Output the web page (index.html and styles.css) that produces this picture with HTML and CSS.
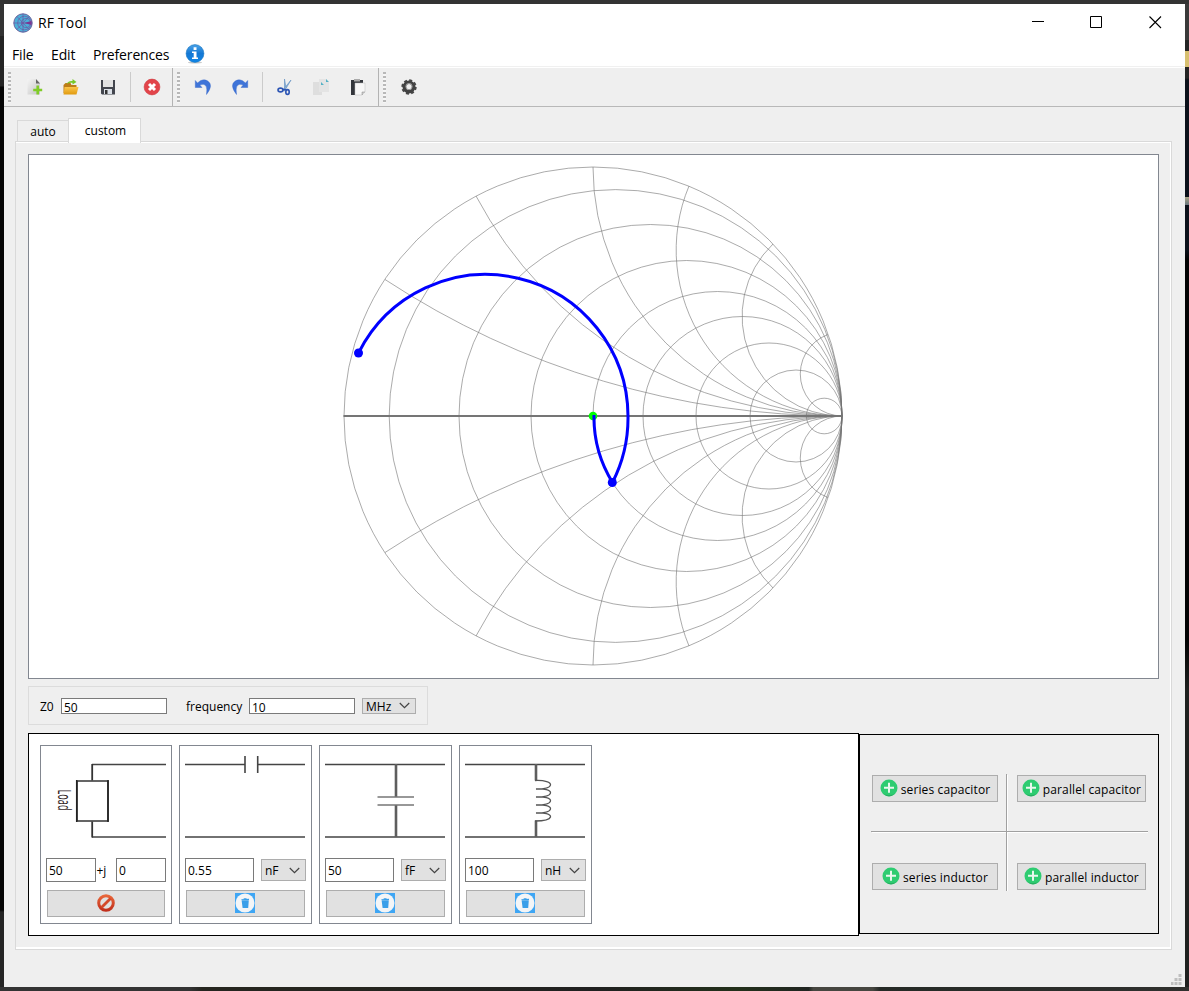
FILE: index.html
```html
<!DOCTYPE html>
<html lang="en">
<head>
<meta charset="utf-8">
<title>RF Tool</title>
<link rel="stylesheet" href="styles.css">
</head>
<body>
<svg class="defs" width="0" height="0">
  <defs>
    <linearGradient id="paper" x1="0" y1="0" x2="1" y2="1"><stop offset="0" stop-color="#f4f4f4"/><stop offset="1" stop-color="#c4c4c4"/></linearGradient>
    <linearGradient id="gold" x1="0" y1="0" x2="0" y2="1"><stop offset="0" stop-color="#fbc64b"/><stop offset="1" stop-color="#e09a10"/></linearGradient>
    <linearGradient id="info" x1="0" y1="0" x2="0" y2="1"><stop offset="0" stop-color="#4ba3e8"/><stop offset=".5" stop-color="#1478d4"/><stop offset="1" stop-color="#0f86e8"/></linearGradient>
    <linearGradient id="ban" x1="0" y1="0" x2="0" y2="1"><stop offset="0" stop-color="#e8663a"/><stop offset="1" stop-color="#c1301c"/></linearGradient>
    <symbol id="chev" viewBox="0 0 10 6"><path d="M.7.7 5 5 9.3.7" fill="none" stroke="#444" stroke-width="1.1"/></symbol>
    <symbol id="plus" viewBox="0 0 18 18"><circle cx="9" cy="9" r="8.5" fill="#2ecc71"/><path d="M3 14.5Q9 20 15 14.5Q9 17.500 3 14.500" fill="#27ae60"/><path d="M9 3.800V13.800M4 8.800H14" stroke="#e9f7ee" stroke-width="2"/></symbol>
    <symbol id="trash" viewBox="0 0 20 20"><path d="M0 0H20V20H0Z" fill="#3fa6f4"/><circle cx="10" cy="10" r="9.500" fill="#f3f5f7"/><path d="M6.600 7.200H13.800L13.200 15H7.600ZM6.400 6.200 14 5.700V6.900H6.400ZM8.700 5.200H11.500V6H8.700Z" fill="#3a9fe9"/></symbol>
  </defs>
</svg>
<div class="window">
  <header class="titlebar">
    <svg class="logo" width="20" height="20" viewBox="0 0 20 20"><circle cx="10" cy="10" r="9.200" fill="#4bb0d8" stroke="#685e9a"/><g fill="none" stroke="#74489b" stroke-width=".6"><path d="M.8 10H19M10 1V19M4 3.500 16 16.500M4 16.500 16 3.500"/><circle cx="11.500" cy="10" r="6.800"/><circle cx="13" cy="10" r="4.600"/></g><path d="M11 10 18.500 8V12Z" fill="#7c3793"/></svg>
    <span class="title">RF Tool</span>
    <svg class="controls" width="132" height="14" viewBox="0 0 132 14" fill="none" stroke="#000"><path d="M0 6.500H12M58.500 1.500H69.500V12.500H58.500Z"/><path d="M117.500 1.500 129 13M129 1.500 117.500 13" stroke-width="1.100"/></svg>
  </header>
  <nav class="menu">
    <span class="m-file">File</span><span class="m-edit">Edit</span><span class="m-pref">Preferences</span>
    <svg width="20" height="20" viewBox="0 0 20 20"><ellipse cx="10" cy="18.500" rx="7" ry="1" fill="#ccc"/><circle cx="10" cy="9.500" r="8.900" fill="url(#info)" stroke="#1673c0" stroke-width=".6"/><path d="M8.600 3.300H11.500V6H8.600ZM7 7.500H11.500V13.500H13V15H7V13.500H8.700V9H7Z" fill="#fff"/></svg>
  </nav>
  <div class="toolbar">
    <i class="grip"></i>
    <svg class="g1" width="108" height="20" viewBox="4 0 108 20">
      <path d="M11.500 2H20L24 6V17.500H11.500Z" fill="url(#paper)"/><path d="M20 2 24 6.500H20Z" fill="#666"/><path d="M21.700 8.500V17.500M17.200 13H26.200" stroke="#80cc28" stroke-width="2.600"/>
      <path d="M47.500 8 49.500 6H54.500L55.500 8H60.500V16H47.500Z" fill="#bd7d18"/><path d="M48.500 10H62.500L60.500 17.500H47.500Z" fill="url(#gold)"/><path d="M50.500 7Q52.500 3.500 56.500 4V2L60.500 5 56.500 7.500V5.800Q53.500 5.500 50.500 7" fill="#77c82b"/>
      <path d="M85 3H99V17.500H86L85 16.500Z" fill="#43464e"/><path d="M87 3H97V10H87Z" fill="#e2e2e2"/><path d="M88 12H96V17H88Z" fill="#dce1e8"/><path d="M89 13H91.500V17H89Z" fill="#333"/>
    </svg>
    <i class="rule"></i>
    <svg class="close" width="18" height="18" viewBox="0 0 18 18"><circle cx="9" cy="9" r="7.900" fill="#e2444a" stroke="#cc383e" stroke-width=".6"/><path d="M6 6 12 12M12 6 6 12" stroke="#fff" stroke-width="3"/></svg>
    <i class="edge"></i>
    <i class="grip"></i>
    <svg class="g2" width="64" height="20" viewBox="0 0 64 20"><path id="undo" d="M2.300 3.500V10.500H9L6.800 8Q15.500 4.500 13.500 17.500Q21 8 14.500 3.800Q9.500 1 4.500 6Z" fill="#3f74d8" stroke="#2f62c8" stroke-width=".4"/><use href="#undo" transform="translate(57 0) scale(-1 1)"/></svg>
    <i class="rule"></i>
    <svg class="g3" width="90" height="20" viewBox="0 0 90 20">
      <path d="M8.500 2 10 11 8.500 12ZM15 3 7 13 8.500 14Z" fill="#8fb6dc" stroke="#6c96c4" stroke-width=".7"/><g fill="none" stroke="#2d55b4" stroke-width="1.600"><ellipse cx="4.500" cy="13" rx="2.500" ry="1.900"/><ellipse cx="11.500" cy="15" rx="1.700" ry="2.400"/><path d="M7 12.500 10.500 12.700"/></g>
      <path d="M37 5H46V18H37Z" fill="#dedede"/><path d="M43 2H50L53 5V15H43Z" fill="#e4e4e4"/><path d="M45 5 48 8H45ZM50 2 53 5H50Z" fill="#55b1c5"/>
      <path d="M75 3H87V18H75Z" fill="#33363b"/><path d="M78 2H84V4.500H78Z" fill="#aaa"/><path d="M79 6H89V15L86 18H79Z" fill="#f7f7f7" stroke="#bbb" stroke-width=".5"/><path d="M86 18V15H89" fill="#ccc" stroke="#888" stroke-width=".5"/>
    </svg>
    <i class="edge"></i>
    <i class="grip"></i>
    <svg class="gear" width="18" height="18" viewBox="0 0 18 18"><circle cx="9" cy="9" r="6.700" fill="none" stroke="#484848" stroke-width="2" stroke-dasharray="3 2.262"/><circle cx="9" cy="9" r="4.700" fill="none" stroke="#424242" stroke-width="3.600"/><circle cx="9" cy="8.500" r="3.200" fill="none" stroke="#999" stroke-width="1"/></svg>
  </div>
  <div class="tabs"><span class="tab">auto</span><span class="tab active">custom</span></div>
  <main class="pane">
    <section class="chart">
      <svg width="1129" height="523" viewBox="29 155 1129 523">
        <g fill="none" stroke="#737373" stroke-opacity=".6">
          <circle cx="593" cy="416" r="249"/>
          <circle cx="615.600" cy="416" r="226.400"/><circle cx="650.500" cy="416" r="191.500"/><circle cx="686.500" cy="416" r="155.500"/><circle cx="717.500" cy="416" r="124.500"/><circle cx="742.500" cy="416" r="99.500"/><circle cx="769" cy="416" r="73"/><circle cx="796" cy="416" r="46"/><circle cx="824.200" cy="416" r="17.800"/>
          <g id="react"><path d="M842 416A833 833 0 0 1 385 279.500"/><path d="M842 416A414.400 414.400 0 0 1 476 196"/><path d="M842 416A249 249 0 0 1 593 167"/><path d="M842 416A166 166 0 0 1 689 186"/><path d="M842 416A99.800 99.800 0 0 1 773 244"/><path d="M842 416A42 42 0 0 1 828 334.500"/></g>
          <use href="#react" transform="translate(0 832) scale(1 -1)"/>
        </g>
        <path d="M343.500 416H842.500" stroke="#757575" stroke-width="2"/>
        <circle cx="593" cy="416" r="4.300" fill="#0f0"/>
        <g fill="none" stroke="#00f" stroke-width="3"><path d="M594 415A124.500 124.500 0 0 0 612.500 482.500A142 142 0 0 0 628 416A142.300 142.300 0 0 0 358.500 353"/></g>
        <g fill="#00f"><circle cx="612.300" cy="482.500" r="4.500"/><circle cx="358.500" cy="353" r="4.500"/></g>
      </svg>
    </section>
    <section class="settings">
      <span class="l-z0">Z0</span><span class="field">50</span><span class="l-freq">frequency</span><span class="field">10</span>
      <span class="select mhz"><span>MHz</span><svg width="11" height="7"><use href="#chev"/></svg></span>
    </section>
    <section class="bottom">
      <div class="circuit">
        <article class="part load">
          <svg width="130" height="106" viewBox="41 746 130 106" fill="none"><path d="M92 764.500H166M92 837H166" stroke="#444" stroke-width="1.300"/><path d="M92.200 764V780.500M92.200 821.500V837.500" stroke="#333" stroke-width="1.800"/><path d="M77 781H108V821H77Z" stroke="#333" stroke-width="1.600"/><path d="M76.700 780V822M108 780V822" stroke="#222" stroke-width="1.500"/><text transform="translate(57.500 789.500) rotate(90)" textLength="21" lengthAdjust="spacingAndGlyphs">Load</text></svg>
          <div class="values"><span class="input half">50</span><span class="j">+j</span><span class="input half">0</span></div>
          <div class="button"><svg width="18" height="18" viewBox="0 0 18 18"><circle cx="9" cy="9" r="7.300" fill="none" stroke="url(#ban)" stroke-width="3"/><path d="M4.500 13.500 13.500 4.500" stroke="#d44a2a" stroke-width="2.800"/></svg></div>
        </article>
        <article class="part">
          <svg width="131" height="106" viewBox="180 746 131 106" fill="none"><path d="M185 764.500H245M258 764.500H305M185 837H305" stroke="#444" stroke-width="1.300"/><path d="M245 756V773M257.700 756V773" stroke="#444" stroke-width="1.600"/></svg>
          <div class="values"><span class="input">0.55</span><span class="select"><span>nF</span><svg width="11" height="7"><use href="#chev"/></svg></span></div>
          <div class="button"><svg width="20" height="20"><use href="#trash"/></svg></div>
        </article>
        <article class="part">
          <svg width="131" height="106" viewBox="320 746 131 106" fill="none"><path d="M325 764.500H445M325 837H445" stroke="#444" stroke-width="1.300"/><path d="M396 764V797M396 805V837" stroke="#5e5e5e" stroke-width="2.600"/><path d="M377.500 797H414M377.500 805H414" stroke="#777" stroke-width="1.500"/></svg>
          <div class="values"><span class="input">50</span><span class="select"><span>fF</span><svg width="11" height="7"><use href="#chev"/></svg></span></div>
          <div class="button"><svg width="20" height="20"><use href="#trash"/></svg></div>
        </article>
        <article class="part">
          <svg width="131" height="106" viewBox="460 746 131 106" fill="none"><path d="M465 764.500H585M465 837H585" stroke="#444" stroke-width="1.300"/><path d="M536 764V780.500M536 820.500V837" stroke="#5e5e5e" stroke-width="2.600"/><path d="M535 780.500C545 780 551 782.500 550.500 785C550 788 544 789 536 789C544 788.500 551 790 550.500 793C550 796 544 797 536 797C544 796.500 551 798 550.500 801C550 804 544 805 536 805C544 804.500 551 806 550.500 809C550 812 544 813 536 813C544 812.500 551 814 550.500 817C549.500 820 544 821 535 821" stroke="#555" stroke-width="1.300"/></svg>
          <div class="values"><span class="input">100</span><span class="select"><span>nH</span><svg width="11" height="7"><use href="#chev"/></svg></span></div>
          <div class="button"><svg width="20" height="20"><use href="#trash"/></svg></div>
        </article>
      </div>
      <div class="palette">
        <div class="cell"><div class="add"><svg width="18" height="18"><use href="#plus"/></svg><span>series capacitor</span></div></div>
        <div class="cell right"><div class="add"><svg width="18" height="18"><use href="#plus"/></svg><span>parallel capacitor</span></div></div>
        <div class="cell low"><div class="add"><svg width="18" height="18"><use href="#plus"/></svg><span>series inductor</span></div></div>
        <div class="cell right low"><div class="add"><svg width="18" height="18"><use href="#plus"/></svg><span>parallel inductor</span></div></div>
      </div>
    </section>
  </main>
  <svg class="resize" width="11" height="11" viewBox="0 0 11 11" fill="#bfbfbf"><path d="M7.500 0h3v3h-3zM3.500 4h3v3h-3zM7.500 4h3v3h-3zM0 8h2.500v3H0zM3.500 8h3v3h-3zM7.500 8h3v3h-3z"/></svg>
</div>
</body>
</html>
```
FILE: styles.css
```css
* { box-sizing: border-box; }
body {
  margin: 0; width: 1189px; height: 991px; padding: 4px; overflow: hidden;
  color: #000; font: 12px "Open Sans", "Noto Sans", sans-serif;
  background:
    linear-gradient(#d8c070, #d8c070) 1185px 51px / 4px 16px no-repeat,
    linear-gradient(#a9a386, #66747c) 1185px 197px / 4px 8px no-repeat,
    linear-gradient(#333, #333) 0 0 / 1189px 4px no-repeat,
    linear-gradient(90deg, #333 0 16%, #25251f 17% 30%, #202020 50%, #23301b 62%, #202521 68%, #464640 68.400% 73.400%, #252a26 74%, #30302e) 0 987px / 1189px 4px no-repeat,
    linear-gradient(#3a3a3a 0 40px, #242424 40px 78px, #0b101a 80px 250px, #020202 260px 640px, #1f201f 690px) 1185px 0 / 4px 991px no-repeat,
    linear-gradient(#333 0 36px, #242424 36px 86px, #040404 87px 910px, #242424 912px) 0 0 / 4px 991px no-repeat;
}
.defs { position: absolute; }
svg { display: block; flex: none; }
.window { position: relative; width: 1181px; height: 983px; background: #efefef; }
.titlebar { display: flex; align-items: center; height: 37px; padding-left: 9px; background: #fff; }
.title { margin-left: 5px; font-size: 14px; letter-spacing: .15px; }
.controls { margin: -2px 21px 0 auto; }
.menu { display: flex; align-items: center; height: 26px; padding: 2px 0 0 8px; background: #fff; border-bottom: 1px solid #f0f0f0; font-size: 14px; letter-spacing: -.15px; }
.m-file { width: 39px; }
.m-edit { width: 42px; }
.m-pref { width: 92px; }
.menu svg { margin-top: -2px; }
.toolbar { display: flex; align-items: center; height: 40px; border-top: 1px solid #fff; border-bottom: 1px solid #b8b8b8; }
.grip { width: 3px; height: 31px; margin-left: 4px; background: repeating-linear-gradient(#b8b8b8 0 2px, #f6f6f6 2px 4px); }
.g1 { margin-left: 9px; }
.rule { width: 1px; height: 30px; background: #cbcbcb; }
.g1 + .rule { margin-left: 2px; }
.close { margin-left: 12px; }
.edge { width: 1px; height: 38px; background: #b3b3b3; }
.close + .edge { margin-left: 11px; }
.g2 { margin-left: 13px; }
.g2 + .rule { margin-left: 5px; }
.g3 { margin-left: 13px; }
.g3 + .edge { margin-left: 12px; }
.gear { margin-left: 14px; }
.tabs { display: flex; align-items: flex-end; height: 35px; padding-left: 13px; }
.tab { width: 51px; height: 22px; border: 1px solid #d9d9d9; border-bottom: 0; border-right: 0; text-align: center; line-height: 21px; }
.tab.active { position: relative; width: 73px; height: 25px; margin-bottom: -1px; padding-left: 2px; background: #fff; border-right: 1px solid #d9d9d9; line-height: 23px; }
.pane { width: 1157px; height: 809px; margin: -1px 0 0 11px; padding: 11px 11px 0; border: 1px solid #d9d9d9; box-shadow: inset 0 1px #fff, inset -1px -2px #fff; }
.chart { width: 1131px; height: 525px; margin: 1px 0 0 1px; background: #fff; border: 1px solid #828790; }
.settings { display: flex; align-items: center; width: 400px; height: 39px; margin: 7px 0 0 1px; padding: 0 11px; border: 1px solid #dcdcdc; }
.l-z0 { width: 21px; padding-top: 2px; }
.field { width: 106px; height: 16px; padding-left: 2px; background: #fff; border: 1px solid #7a7a7a; line-height: 17px; }
.l-freq { width: 63px; margin-left: 19px; padding-top: 2px; }
.select { display: flex; align-items: center; justify-content: space-between; width: 45px; height: 22px; padding: 0 5px 0 3px; background: #e1e1e1; border: 1px solid #adadad; }
.select span { padding-top: 1px; }
.mhz { width: 54px; height: 16px; margin-left: 7px; padding: 0 5px 0 3px; }
.bottom { display: flex; margin: 8px 0 0 1px; }
.circuit { display: flex; width: 831px; height: 203px; padding: 11px; gap: 7px; background: #fff; border: 1px solid #000; }
.part { width: 133px; height: 179px; border: 1px solid #828790; }
.part.load { width: 132px; }
.part text { font: 18px "Open Sans", sans-serif; fill: #33261f; }
.values { display: flex; justify-content: space-between; align-items: center; height: 36px; padding: 0 5px; }
.j { width: 19px; }
.input { width: 69px; height: 24px; padding-left: 2px; background: #fff; border: 1px solid #7a7a7a; line-height: 23px; }
.half { width: 50px; }
.button { display: flex; align-items: center; justify-content: center; height: 27px; margin: 2px 6px 0; padding: 0 1px 2px 0; background: #e1e1e1; border: 1px solid #adadad; }
.palette { display: grid; grid-template-columns: 136px 141px; grid-template-rows: 58px 59px; justify-content: start; width: 300px; height: 200px; margin-top: 1px; padding: 39px 0 0 11px; border: 1px solid #000; }
.cell { padding: 1px 0 0 1px; border-right: 1px solid #a0a0a0; border-bottom: 1px solid #a0a0a0; box-shadow: 1px 1px #fff; }
.cell.right { padding-left: 10px; border-right: 0; box-shadow: 0 1px #fff; }
.cell.low { padding-top: 31px; border-bottom: 0; box-shadow: 1px 0 #fff; }
.cell.right.low { box-shadow: none; }
.add { display: flex; align-items: center; justify-content: center; gap: 3px; width: 126px; height: 27px; background: #e1e1e1; border: 1px solid #adadad; white-space: nowrap; letter-spacing: .12px; }
.right .add { width: 129px; }
.add span { padding-top: 2px; }
.add svg { margin-top: -1px; }
.resize { position: absolute; right: 3px; bottom: 2px; }
```
